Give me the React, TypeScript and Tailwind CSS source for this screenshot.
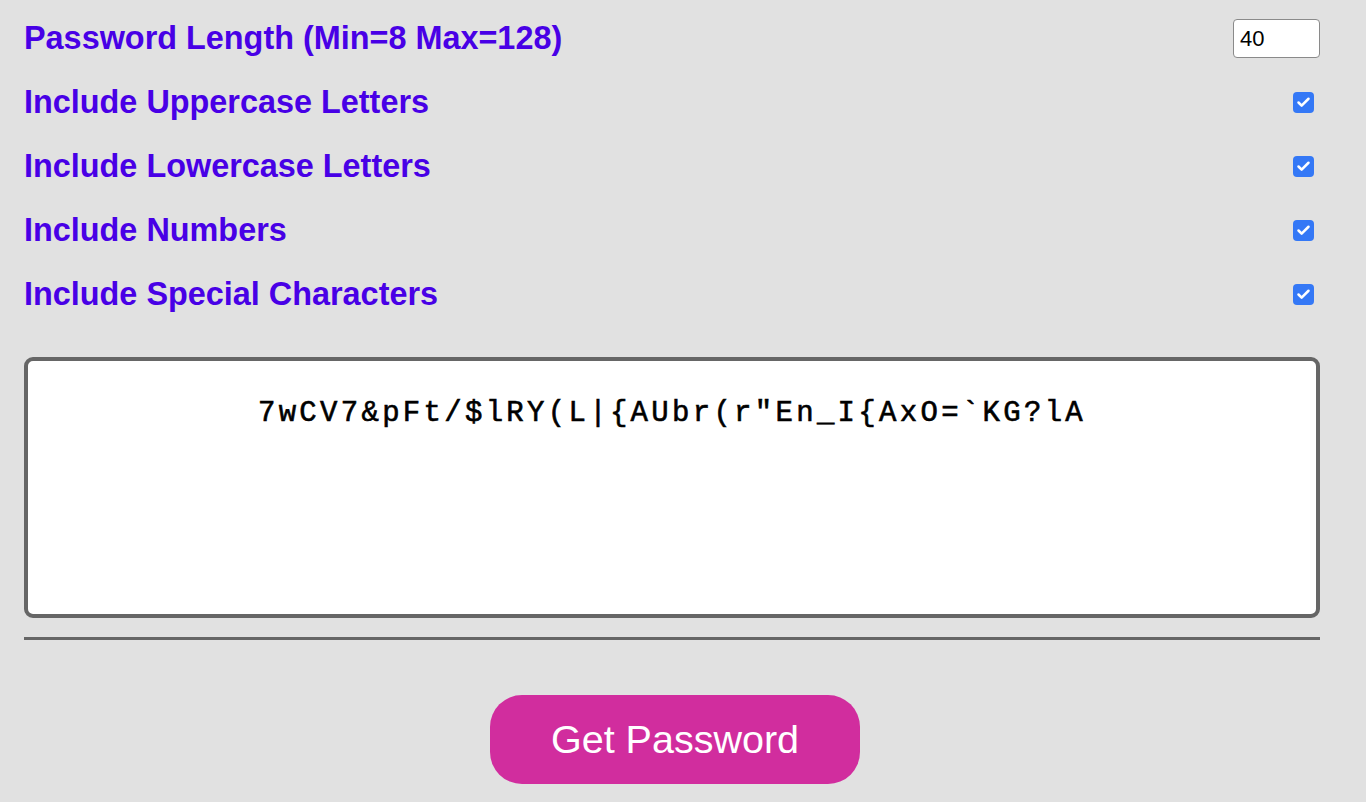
import { Check } from 'lucide-react'

const options = [
  'Include Uppercase Letters',
  'Include Lowercase Letters',
  'Include Numbers',
  'Include Special Characters',
]

function FakeCheckbox() {
  return (
    <div className="w-[21px] h-[21px] mr-[6px] rounded-[4px] bg-[#3478f6] flex items-center justify-center">
      <Check className="w-[15px] h-[15px] text-white" strokeWidth={4} />
    </div>
  )
}

export default function App() {
  return (
    <div className="min-h-[802px] bg-[#e1e1e1] pl-6 pr-[46px] pt-[6px] [font-family:'Liberation_Sans',Arial,sans-serif]">
      <div className="flex h-16 items-center justify-between">
        <span className="text-[32.4px] font-bold text-[#4800e6]">Password Length (Min=8 Max=128)</span>
        <div className="w-[87px] h-[39px] bg-white border border-[#8a8a8a] rounded-[4px] flex items-center px-[6px] text-[22px] text-black">
          40
        </div>
      </div>
      {options.map((label) => (
        <div key={label} className="flex h-16 items-center justify-between">
          <span className="text-[32.4px] font-bold text-[#4800e6]">{label}</span>
          <FakeCheckbox />
        </div>
      ))}
      <div className="mt-[31px] h-[261px] bg-white border-4 border-[#666666] rounded-[9px] pt-[31px] text-center">
        <span className="[font-family:'Liberation_Mono',monospace] text-[29px] tracking-[3.3px] text-black [-webkit-text-stroke:0.6px_black]">
          {'7wCV7&pFt/$lRY(L|{AUbr(r"En_I{AxO=`KG?lA'}
        </span>
      </div>
      <div className="mt-[19px] h-[3px] bg-[#666666]" />
      <div className="flex justify-center mt-[55px] pl-[6px]">
        <button className="w-[370px] h-[89px] rounded-[32px] bg-[#d12d9e] text-white text-[39.5px]">
          Get Password
        </button>
      </div>
    </div>
  )
}
